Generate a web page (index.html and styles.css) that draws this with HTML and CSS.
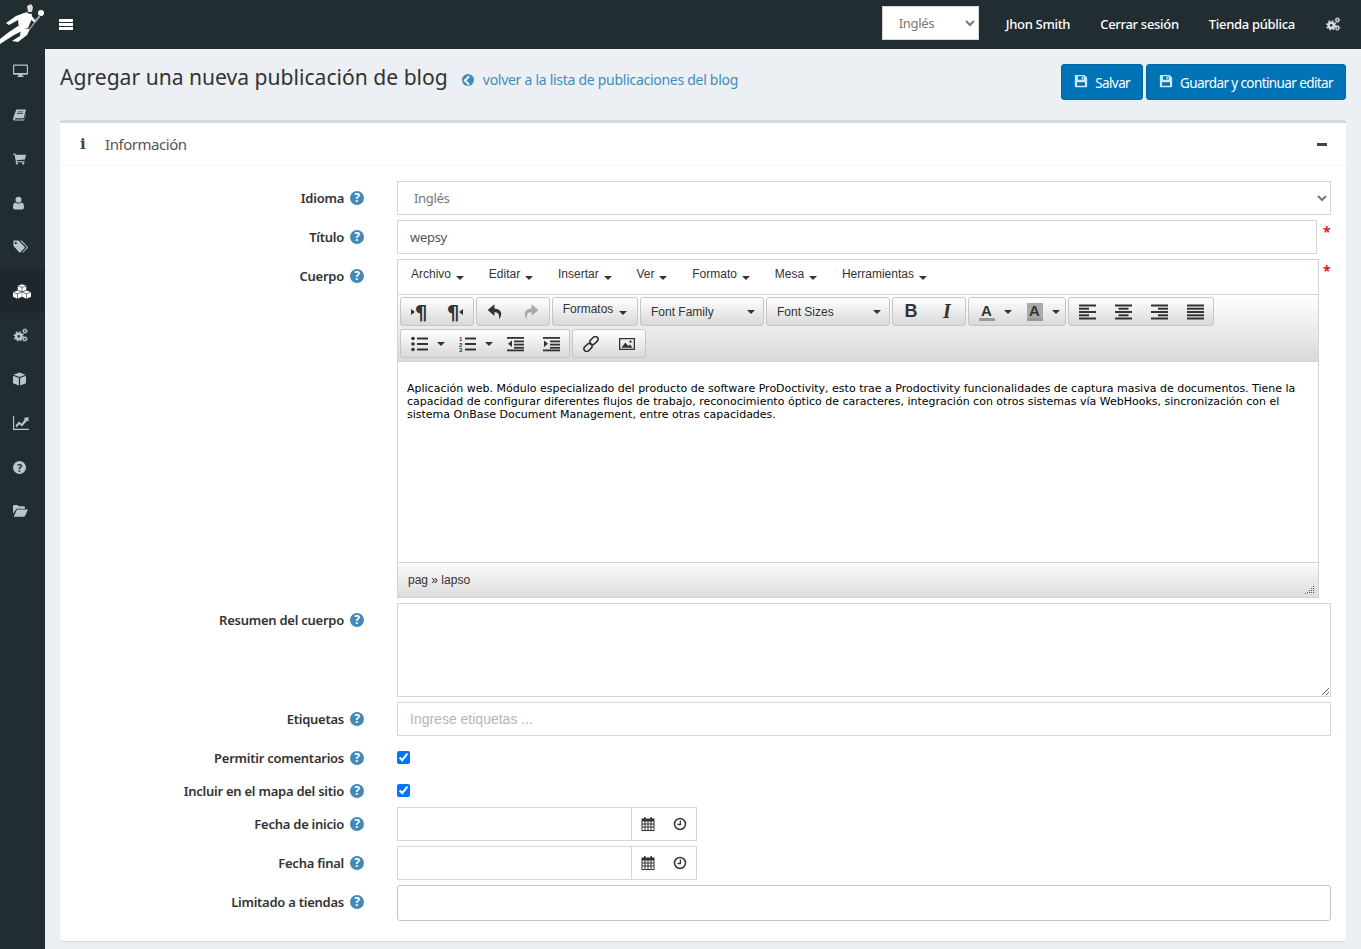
FILE: index.html
```html
<!DOCTYPE html>
<html lang="es">
<head>
    <meta charset="UTF-8">
    <meta name="viewport" content="width=device-width, initial-scale=1.0">
    <title>Agregar una nueva publicación de blog</title>
    <link rel="stylesheet" href="styles.css">
</head>
<body>
    <svg class="sprite" xmlns="http://www.w3.org/2000/svg">
        <symbol id="i-cogs" viewBox="0 0 16 16">
            <circle cx="6" cy="9.500" r="3" fill="none" stroke="currentColor" stroke-width="3"/>
            <circle cx="6" cy="9.500" r="5.100" fill="none" stroke="currentColor" stroke-width="1.700" stroke-dasharray="2 2"/>
            <circle cx="13" cy="3.500" r="1.700" fill="none" stroke="currentColor" stroke-width="1.400"/>
            <circle cx="13" cy="12.500" r="1.700" fill="none" stroke="currentColor" stroke-width="1.400"/>
            <circle cx="13" cy="3.500" r="2.800" fill="none" stroke="currentColor" stroke-width="1" stroke-dasharray="1.300 1.300"/>
            <circle cx="13" cy="12.500" r="2.800" fill="none" stroke="currentColor" stroke-width="1" stroke-dasharray="1.300 1.300"/>
        </symbol>
        <symbol id="i-save" viewBox="0 0 16 16">
            <path fill="currentColor" fill-rule="evenodd" d="M2 1h10l3 3v10a1 1 0 0 1-1 1H2a1 1 0 0 1-1-1V2a1 1 0 0 1 1-1zM4.500 2.500v4h6.500v-4zM8.600 3h1.500v3H8.600zM3.500 9.500v4h9v-4z"/>
        </symbol>
        <symbol id="i-desktop" viewBox="0 0 16 15">
            <path fill="currentColor" fill-rule="evenodd" d="M1 .5h14a1 1 0 0 1 1 1v9a1 1 0 0 1-1 1H10l.4 1.500h1.100v1h-7v-1h1.100l.4-1.500H1a1 1 0 0 1-1-1v-9a1 1 0 0 1 1-1zM1.200 1.800v7.900h13.600V1.800z"/>
        </symbol>
        <symbol id="i-book" viewBox="0 0 14 12">
            <path fill="currentColor" fill-rule="evenodd" d="M3.500 0H14l-2.500 9.500H2.800c-.9 0-1 1.300 0 1.300h9.300l1.500-6 .4.400L12 12H2.200C.4 12-.2 10.500.2 9.200zM5 2.200l-.2.800h6.300l.2-.8zM4.400 4.200l-.2.800h6.300l.2-.8z"/>
        </symbol>
        <symbol id="i-cart" viewBox="0 0 14 12">
            <path fill="currentColor" d="M0 0h2.500l.5 1.500H14l-1.200 5-8.800.9.300.9h8.200v1.100H3.200L1.600 1.100H0z"/>
            <circle cx="4.200" cy="10.800" r="1.200" fill="currentColor"/>
            <circle cx="11" cy="10.800" r="1.200" fill="currentColor"/>
        </symbol>
        <symbol id="i-user" viewBox="0 0 11 13">
            <circle cx="5.500" cy="3.300" r="3" fill="currentColor"/>
            <path fill="currentColor" d="M2.300 6c.8.700 2 1.100 3.200 1.100S7.900 6.700 8.700 6C10.300 6.400 11 8 11 10.800c0 1.300-.7 2.200-1.900 2.200H1.900C.7 13 0 12.100 0 10.800 0 8 .7 6.400 2.300 6z"/>
        </symbol>
        <symbol id="i-tags" viewBox="0 0 16 14">
            <path fill="currentColor" fill-rule="evenodd" d="M.5 0h5.300l6.600 6.600c.4.400.4 1 0 1.400l-4.400 4.500c-.4.400-1 .4-1.400 0L.5 5.800zM3 1.600a1.200 1.200 0 1 0 0 2.400 1.200 1.200 0 0 0 0-2.400z"/>
            <path fill="currentColor" d="M7.600 0h1.800l6.200 6.600c.4.400.4 1 0 1.400l-4.400 4.500c-.4.400-.9.300-1.200 0l4.200-4.400c.5-.5.500-1.100 0-1.600z"/>
        </symbol>
        <symbol id="i-cubes" viewBox="0 0 20 16">
            <g fill="currentColor">
                <path d="M10 0l4.700 1.700v4.700L10 8.100 5.300 6.400V1.700z"/>
                <path d="M5 7l4.800 1.700v5.200L5 16 0 13.900V8.700z"/>
                <path d="M15 7l5 1.700v5.200L15 16l-4.800-2.100V8.700z"/>
            </g>
            <path fill="none" stroke="#1e282c" stroke-width=".7" d="M5.600 1.900L10 3.500l4.400-1.600M.3 8.900L5 10.500l4.500-1.600M5 10.500V16M10.500 8.900l4.500 1.600 4.700-1.600M15 10.500V16M10 3.500v4.600"/>
        </symbol>
        <symbol id="i-cube" viewBox="0 0 14 14">
            <path fill="currentColor" d="M7 0l6.500 2.300L7 4.800.5 2.300zM0 3.500l6.300 2.400V14L0 11.500zM14 3.500v8L7.700 14V5.900z"/>
        </symbol>
        <symbol id="i-chart" viewBox="0 0 16 14">
            <path fill="currentColor" d="M0 0h1.100v12.800H16V14H0z"/>
            <path fill="currentColor" d="M2.500 9.500l3.600-4 2.500 2.200 3.300-4.400-1.200-1.100L15.500 1v4.800l-1.200-1.200-5.400 6-2.500-2.300-3 3.100z"/>
        </symbol>
        <symbol id="i-folder" viewBox="0 0 16 13">
            <path fill="currentColor" d="M0 1.500C0 .7.600 0 1.400 0h3.300l1.400 1.500h5.300c.7 0 1.300.6 1.300 1.300V4H3.700L0 9.500z"/>
            <path fill="currentColor" d="M4.200 5H16l-3.200 6.700c-.2.500-.6.800-1.100.8H.7z"/>
        </symbol>
        <symbol id="i-calendar" viewBox="0 0 14 14">
            <path fill="currentColor" fill-rule="evenodd" d="M3 0h1.500v1.500h5V0H11v1.500h2.500V14H.5V1.500H3zM1.500 4.500v2h2v-2zM4.500 4.500v2h2v-2zM7.500 4.500v2h2v-2zM10.500 4.500v2h2v-2zM1.500 7.500v2h2v-2zM4.500 7.500v2h2v-2zM7.500 7.500v2h2v-2zM10.500 7.500v2h2v-2zM1.500 10.500V13h2v-2.500zM4.500 10.500V13h2v-2.500zM7.500 10.500V13h2v-2.500zM10.500 10.500V13h2v-2.500z"/>
        </symbol>
        <symbol id="i-clock" viewBox="0 0 14 14">
            <circle cx="7" cy="7" r="5.500" fill="none" stroke="currentColor" stroke-width="1.500"/>
            <path fill="none" stroke="currentColor" stroke-width="1.300" d="M7.400 3.500v4H4.500"/>
        </symbol>
        <symbol id="i-undo" viewBox="0 0 16 16">
            <path fill="currentColor" d="M7.500 1L1.500 6.300l6 5.200V8.200c3 0 4.700 1.500 4 6.300 3-3.500 3.500-9.200-4-9.700z"/>
        </symbol>
        <symbol id="i-link" viewBox="0 0 16 16">
            <g fill="none" stroke="currentColor" stroke-width="1.600">
                <rect x="8.300" y="0" width="5.400" height="9" rx="2.600" transform="rotate(45 11 4.500)"/>
                <rect x="2.300" y="7" width="5.400" height="9" rx="2.600" transform="rotate(45 5 11.500)"/>
            </g>
        </symbol>
        <symbol id="i-image" viewBox="0 0 16 14">
            <path fill="currentColor" fill-rule="evenodd" d="M0 1h16v12H0zM1.300 2.300v9.400h13.400V2.300z"/>
            <path fill="currentColor" d="M2.500 10.700l3.800-5.200 3 3.400 1.700-1.400 2.500 3.200z"/>
            <circle cx="11.500" cy="4.600" r="1.200" fill="currentColor"/>
        </symbol>
        <symbol id="i-bullist" viewBox="0 0 17 16">
            <g fill="currentColor">
                <circle cx="2" cy="2.500" r="1.800"/><circle cx="2" cy="8" r="1.800"/><circle cx="2" cy="13.500" r="1.800"/>
                <rect x="6" y="1.500" width="11" height="2"/><rect x="6" y="7" width="11" height="2"/><rect x="6" y="12.500" width="11" height="2"/>
            </g>
        </symbol>
        <symbol id="i-numlist" viewBox="0 0 17 16">
            <g fill="currentColor">
                <rect x="6" y="1.500" width="11" height="2"/><rect x="6" y="7" width="11" height="2"/><rect x="6" y="12.500" width="11" height="2"/>
                <text x="0" y="5" font-family="Liberation Sans" font-size="6" font-weight="700">1</text>
                <text x="0" y="10.500" font-family="Liberation Sans" font-size="6" font-weight="700">2</text>
                <text x="0" y="16" font-family="Liberation Sans" font-size="6" font-weight="700">3</text>
            </g>
        </symbol>
        <symbol id="i-outdent" viewBox="0 0 17 16">
            <g fill="currentColor">
                <rect y="1" width="17" height="1.800"/><rect x="7" y="4.500" width="10" height="1.800"/><rect x="7" y="7.700" width="10" height="1.800"/><rect x="7" y="10.900" width="10" height="1.800"/><rect y="13.500" width="17" height="1.800"/>
                <path d="M5 4.500v6.500L1 7.800z"/>
            </g>
        </symbol>
        <symbol id="i-indent" viewBox="0 0 17 16">
            <g fill="currentColor">
                <rect y="1" width="17" height="1.800"/><rect x="7" y="4.500" width="10" height="1.800"/><rect x="7" y="7.700" width="10" height="1.800"/><rect x="7" y="10.900" width="10" height="1.800"/><rect y="13.500" width="17" height="1.800"/>
                <path d="M1 4.500v6.500l4-3.200z"/>
            </g>
        </symbol>
        <symbol id="i-al" viewBox="0 0 17 15">
            <g fill="currentColor"><rect width="17" height="2"/><rect y="3.200" width="10" height="2"/><rect y="6.500" width="17" height="2"/><rect y="9.800" width="10" height="2"/><rect y="13" width="17" height="2"/></g>
        </symbol>
        <symbol id="i-ac" viewBox="0 0 17 15">
            <g fill="currentColor"><rect width="17" height="2"/><rect x="3.500" y="3.200" width="10" height="2"/><rect y="6.500" width="17" height="2"/><rect x="3.500" y="9.800" width="10" height="2"/><rect y="13" width="17" height="2"/></g>
        </symbol>
        <symbol id="i-ar" viewBox="0 0 17 15">
            <g fill="currentColor"><rect width="17" height="2"/><rect x="7" y="3.200" width="10" height="2"/><rect y="6.500" width="17" height="2"/><rect x="7" y="9.800" width="10" height="2"/><rect y="13" width="17" height="2"/></g>
        </symbol>
        <symbol id="i-aj" viewBox="0 0 17 15">
            <g fill="currentColor"><rect width="17" height="2"/><rect y="3.200" width="17" height="2"/><rect y="6.500" width="17" height="2"/><rect y="9.800" width="17" height="2"/><rect y="13" width="17" height="2"/></g>
        </symbol>
    </svg>

    <header class="topbar">
        <a class="logo" href="#">
            <svg viewBox="0 0 46 46" width="46" height="46">
                <g fill="#fff">
                    <path d="M6 23l10-7 11-4 2 3-11 5-9 5z"/>
                    <path d="M24 13l8 1-1 7-3 7-9 1-1-9z"/>
                    <path d="M31 15l4 5 4-4 1 1-5 6-5-4z"/>
                    <path d="M18 26l8 3-12 6-14 9v-5l9-7z"/>
                    <path d="M21 28l9 1-3 6-9 7-6-1 8-5z"/>
                    <circle cx="41" cy="13" r="3"/>
                </g>
                <path d="M27 6l4-2 2 3-1 5-4 0z" fill="#ddd"/>
                <path d="M39 17L29 30" stroke="#999" stroke-width="1.300"/>
            </svg>
        </a>
        <a class="menu-toggle" href="#"><span></span><span></span><span></span></a>
        <div class="topbar-right">
            <select class="lang-select"><option>Inglés</option></select>
            <a href="#">Jhon Smith</a>
            <a href="#">Cerrar sesión</a>
            <a href="#">Tienda pública</a>
            <a class="cog" href="#"><svg class="ic"><use href="#i-cogs"/></svg></a>
        </div>
    </header>

    <div class="wrap">
        <aside class="sidebar">
            <a href="#"><svg class="ic s15"><use href="#i-desktop"/></svg></a>
            <a href="#"><svg class="ic s13"><use href="#i-book"/></svg></a>
            <a href="#"><svg class="ic s13"><use href="#i-cart"/></svg></a>
            <a href="#"><svg class="ic s11"><use href="#i-user"/></svg></a>
            <a href="#"><svg class="ic s15"><use href="#i-tags"/></svg></a>
            <a class="active" href="#"><svg class="ic ic-wide"><use href="#i-cubes"/></svg></a>
            <a href="#"><svg class="ic s15"><use href="#i-cogs"/></svg></a>
            <a href="#"><svg class="ic s13"><use href="#i-cube"/></svg></a>
            <a href="#"><svg class="ic"><use href="#i-chart"/></svg></a>
            <a href="#"><span class="side-help">?</span></a>
            <a href="#"><svg class="ic s15"><use href="#i-folder"/></svg></a>
        </aside>

        <main class="content">
            <div class="page-head">
                <h1>Agregar una nueva publicación de blog</h1>
                <a class="back" href="#"><span class="back-icon"></span>volver a la lista de publicaciones del blog</a>
                <div class="actions">
                    <button class="btn"><svg class="ic-save"><use href="#i-save"/></svg>Salvar</button>
                    <button class="btn"><svg class="ic-save"><use href="#i-save"/></svg>Guardar y continuar editar</button>
                </div>
            </div>

            <section class="card">
                <div class="card-head">
                    <span class="info-i">i</span>
                    <span class="card-title">Información</span>
                    <span class="minus"></span>
                </div>
                <div class="card-body">
                    <div class="row">
                        <label class="lbl">Idioma <span class="help">?</span></label>
                        <div class="ctrl"><select class="input sel"><option>Inglés</option></select></div>
                    </div>
                    <div class="row">
                        <label class="lbl">Título <span class="help">?</span></label>
                        <div class="ctrl"><input class="input" type="text" value="wepsy"><span class="req">*</span></div>
                    </div>
                    <div class="row">
                        <label class="lbl">Cuerpo <span class="help">?</span></label>
                        <div class="ctrl">
                            <div class="editor">
                                <div class="ed-menu">
                                    <span>Archivo<i class="caret"></i></span>
                                    <span>Editar<i class="caret"></i></span>
                                    <span>Insertar<i class="caret"></i></span>
                                    <span>Ver<i class="caret"></i></span>
                                    <span>Formato<i class="caret"></i></span>
                                    <span>Mesa<i class="caret"></i></span>
                                    <span>Herramientas<i class="caret"></i></span>
                                </div>
                                <div class="ed-toolbar">
                                    <div class="tb-row">
                                        <div class="tb-group">
                                            <span class="tb w36 pil"><i class="tri-r"></i>¶</span>
                                            <span class="tb w36 pil">¶<i class="tri-l"></i></span>
                                        </div>
                                        <div class="tb-group">
                                            <span class="tb w36"><svg class="t18"><use href="#i-undo"/></svg></span>
                                            <span class="tb w36 off"><svg class="t18 flip"><use href="#i-undo"/></svg></span>
                                        </div>
                                        <div class="tb-group">
                                            <span class="tb w84 txt-up">Formatos<i class="caret"></i></span>
                                        </div>
                                        <div class="tb-group">
                                            <span class="tb w122 listbox">Font Family<i class="caret"></i></span>
                                        </div>
                                        <div class="tb-group">
                                            <span class="tb w122 listbox">Font Sizes<i class="caret"></i></span>
                                        </div>
                                        <div class="tb-group">
                                            <span class="tb w36 fmt-b">B</span>
                                            <span class="tb w36 fmt-i">I</span>
                                        </div>
                                        <div class="tb-group">
                                            <span class="tb w48 split"><b class="color-a">A</b><i class="caret"></i></span>
                                            <span class="tb w48 split"><b class="color-a bg">A</b><i class="caret"></i></span>
                                        </div>
                                        <div class="tb-group">
                                            <span class="tb w36"><svg class="t17"><use href="#i-al"/></svg></span>
                                            <span class="tb w36"><svg class="t17"><use href="#i-ac"/></svg></span>
                                            <span class="tb w36"><svg class="t17"><use href="#i-ar"/></svg></span>
                                            <span class="tb w36"><svg class="t17"><use href="#i-aj"/></svg></span>
                                        </div>
                                    </div>
                                    <div class="tb-row">
                                        <div class="tb-group">
                                            <span class="tb w48 split"><svg class="t17"><use href="#i-bullist"/></svg><i class="caret"></i></span>
                                            <span class="tb w48 split"><svg class="t17"><use href="#i-numlist"/></svg><i class="caret"></i></span>
                                            <span class="tb w36"><svg class="t17"><use href="#i-outdent"/></svg></span>
                                            <span class="tb w36"><svg class="t17"><use href="#i-indent"/></svg></span>
                                        </div>
                                        <div class="tb-group">
                                            <span class="tb w36"><svg class="t16"><use href="#i-link"/></svg></span>
                                            <span class="tb w36"><svg class="t16"><use href="#i-image"/></svg></span>
                                        </div>
                                    </div>
                                </div>
                                <div class="ed-body">Aplicación web. Módulo especializado del producto de software ProDoctivity, esto trae a Prodoctivity funcionalidades de captura masiva de documentos. Tiene la capacidad de configurar diferentes flujos de trabajo, reconocimiento óptico de caracteres, integración con otros sistemas vía WebHooks, sincronización con el sistema OnBase Document Management, entre otras capacidades.</div>
                                <div class="ed-status">
                                    <span>pag » lapso</span>
                                    <svg class="grip" viewBox="0 0 10 8" width="10" height="8">
                                        <path d="M8 0h1v1H8zM6 2h1v1H6zM8 2h1v1H8zM4 4h1v1H4zM6 4h1v1H6zM8 4h1v1H8zM2 6h1v1H2zM0 7h1v1H0zM4 6h1v1H4zM6 6h1v1H6zM8 6h1v1H8z" fill="#555"/>
                                    </svg>
                                </div>
                            </div>
                            <span class="req req-ed">*</span>
                        </div>
                    </div>
                    <div class="row">
                        <label class="lbl">Resumen del cuerpo <span class="help">?</span></label>
                        <div class="ctrl"><textarea class="input area"></textarea></div>
                    </div>
                    <div class="row">
                        <label class="lbl">Etiquetas <span class="help">?</span></label>
                        <div class="ctrl"><input class="input tags" type="text" placeholder="Ingrese etiquetas ..."></div>
                    </div>
                    <div class="row row-check">
                        <label class="lbl">Permitir comentarios <span class="help">?</span></label>
                        <div class="ctrl"><input class="check" type="checkbox" checked></div>
                    </div>
                    <div class="row row-check">
                        <label class="lbl">Incluir en el mapa del sitio <span class="help">?</span></label>
                        <div class="ctrl"><input class="check" type="checkbox" checked></div>
                    </div>
                    <div class="row">
                        <label class="lbl">Fecha de inicio <span class="help">?</span></label>
                        <div class="ctrl">
                            <div class="datepick">
                                <input type="text">
                                <div class="date-btns"><svg class="t14"><use href="#i-calendar"/></svg><svg class="t14"><use href="#i-clock"/></svg></div>
                            </div>
                        </div>
                    </div>
                    <div class="row">
                        <label class="lbl">Fecha final <span class="help">?</span></label>
                        <div class="ctrl">
                            <div class="datepick">
                                <input type="text">
                                <div class="date-btns"><svg class="t14"><use href="#i-calendar"/></svg><svg class="t14"><use href="#i-clock"/></svg></div>
                            </div>
                        </div>
                    </div>
                    <div class="row">
                        <label class="lbl">Limitado a tiendas <span class="help">?</span></label>
                        <div class="ctrl"><div class="multi"></div></div>
                    </div>
                </div>
            </section>
        </main>
    </div>
</body>
</html>
```

FILE: styles.css
```css
* {
    box-sizing: border-box;
}

body {
    margin: 0;
    background-color: #ecf0f5;
    color: #333;
    font-family: "Noto Sans", sans-serif;
    font-size: 13px;
}

a {
    text-decoration: none;
}

.sprite {
    display: none;
}

/* barra superior */
.topbar {
    display: flex;
    align-items: center;
    height: 49px;
    background-color: #222d32;
}

.logo {
    display: block;
    width: 45px;
    height: 49px;
}

.logo svg {
    display: block;
}

.menu-toggle {
    display: flex;
    flex-direction: column;
    gap: 1px;
    width: 14px;
    margin: -1px 0 0 14px;
}

.menu-toggle span {
    height: 3px;
    background-color: #fff;
}

.topbar-right {
    display: flex;
    align-items: center;
    margin-left: auto;
    padding-right: 20px;
}

.topbar-right a {
    margin: 0 0 2px 30px;
    color: #fff;
    font-size: 13px;
    font-weight: 500;
    letter-spacing: -.3px;
}

.topbar-right a:first-of-type {
    margin-left: 27px;
}

.topbar-right .cog {
    display: flex;
    color: #d8dde0;
}

.ic {
    display: block;
    width: 16px;
    height: 14px;
}

.ic-wide {
    width: 18px;
    height: 15px;
}

.s15 { width: 15px; }
.s13 { width: 13px; }
.s11 { width: 11px; }

.lang-select {
    width: 97px;
    height: 34px;
    margin-bottom: 3px;
    padding-left: 12px;
    border: 1px solid #d2d6de;
    border-radius: 0;
    background-color: #fff;
    color: #777;
    font-family: "Noto Sans", sans-serif;
    font-size: 13px;
    letter-spacing: -.3px;
}

/* cuerpo */
.wrap {
    display: flex;
    min-height: 900px;
}

.sidebar {
    flex: 0 0 45px;
    background-color: #222d32;
}

.sidebar a {
    display: flex;
    align-items: center;
    height: 44px;
    padding-left: 13px;
    color: #b8c7ce;
}

.sidebar a.active {
    background-color: #1e282c;
    color: #fff;
}

.side-help {
    width: 13px;
    height: 13px;
    border-radius: 50%;
    background-color: #b8c7ce;
    color: #222d32;
    font-size: 11px;
    font-weight: 700;
    line-height: 13px;
    text-align: center;
}

.content {
    flex: 1;
    padding: 15px 15px 8px;
}

.page-head {
    display: flex;
    align-items: flex-start;
    margin-bottom: 20px;
}

.page-head h1 {
    margin: -1px 0 0;
    color: #333;
    font-size: 21.100px;
    font-weight: 400;
    line-height: 28px;
}

.back {
    display: flex;
    align-items: center;
    margin: 6px 0 0 14px;
    color: #3c8dbc;
    font-size: 14px;
    letter-spacing: -.28px;
}

.back-icon {
    position: relative;
    width: 12px;
    height: 12px;
    margin-right: 9px;
    border-radius: 50%;
    background-color: #3c8dbc;
}

.back-icon::before {
    content: "";
    position: absolute;
    top: 3px;
    left: 3px;
    width: 5px;
    height: 5px;
    border-left: 2px solid #ecf0f5;
    border-bottom: 2px solid #ecf0f5;
    transform: rotate(45deg);
}

.actions {
    display: flex;
    gap: 3px;
    margin-left: auto;
}

.btn {
    display: flex;
    align-items: center;
    height: 36px;
    padding: 2px 12px 0;
    border: 1px solid #0067a3;
    border-radius: 3px;
    background-color: #0073b7;
    color: #fff;
    font-family: "Noto Sans", sans-serif;
    font-size: 13.500px;
    letter-spacing: -.6px;
}

.ic-save {
    width: 14px;
    height: 14px;
    margin: -5px 7px 0 0;
    color: #d6e6f2;
}

/* tarjeta */
.card {
    border-top: 3px solid #d2d6de;
    border-radius: 3px;
    background-color: #fff;
    box-shadow: 0 1px 1px rgba(0, 0, 0, .1);
}

.card-head {
    display: flex;
    align-items: center;
    height: 43px;
    padding: 0 20px;
    border-bottom: 1px solid #f4f4f4;
}

.info-i {
    width: 25px;
    color: #444;
    font-family: "DejaVu Serif", serif;
    font-size: 15px;
    font-weight: 700;
}

.card-title {
    color: #555;
    font-size: 15px;
    letter-spacing: -.45px;
}

.minus {
    width: 10px;
    height: 3px;
    margin-left: auto;
    margin-right: -1px;
    background-color: #444;
}

.card-body {
    display: flex;
    flex-direction: column;
    gap: 5px;
    padding: 15px 15px 20px 0;
}

.row {
    display: flex;
    align-items: flex-start;
}

.row-check {
    height: 28px;
}

.lbl {
    flex: 0 0 337px;
    display: flex;
    justify-content: flex-end;
    align-items: center;
    gap: 6px;
    height: 34px;
    padding-right: 33px;
    color: #333;
    font-size: 13px;
    font-weight: 600;
    letter-spacing: -.25px;
}

.help {
    flex: 0 0 14px;
    width: 14px;
    height: 14px;
    border-radius: 50%;
    background-color: #4289b8;
    color: #fff;
    font-size: 12px;
    font-weight: 700;
    letter-spacing: 0;
    line-height: 14px;
    text-align: center;
}

.ctrl {
    flex: 1;
    display: flex;
    align-items: flex-start;
    min-width: 0;
}

.input {
    width: 100%;
    height: 34px;
    padding: 0 12px;
    border: 1px solid #d2d6de;
    border-radius: 0;
    background-color: #fff;
    color: #555;
    font-family: "Noto Sans", sans-serif;
    font-size: 13px;
    letter-spacing: -.3px;
    outline: none;
}

.sel {
    padding-left: 12px;
    color: #777;
}

.area {
    display: block;
    height: 94px;
    padding: 6px 12px;
}

.tags {
    font-family: "Liberation Sans", sans-serif;
    font-size: 14px;
    letter-spacing: 0;
}

.tags::placeholder {
    color: #b5b5b5;
}

.req {
    flex: 0 0 14px;
    padding: 2px 0 0 6px;
    color: #e02020;
    font-size: 14px;
    font-weight: 700;
    line-height: 20px;
}

.req-ed {
    flex: 0 0 12px;
    padding-left: 4px;
}

.check {
    width: 13px;
    height: 13px;
    margin: 10px 0 0;
}

.datepick {
    display: flex;
    width: 300px;
    height: 34px;
    border: 1px solid #d2d6de;
    background-color: #fff;
}

.datepick input {
    flex: 1;
    min-width: 0;
    border: 0;
    border-right: 1px solid #d2d6de;
    outline: none;
}

.date-btns {
    flex: 0 0 64px;
    display: flex;
    align-items: center;
    justify-content: space-between;
    padding: 0 9px;
    color: #333;
}

.t14 {
    width: 14px;
    height: 14px;
}

.multi {
    width: 100%;
    height: 36px;
    border: 1px solid #c4c4c4;
    border-radius: 3px;
    background-color: #fff;
}

/* editor */
.editor {
    flex: 1;
    min-width: 0;
    border: 1px solid #d4d4d4;
    font-family: "Liberation Sans", sans-serif;
    font-size: 12px;
    color: #333;
}

.ed-menu {
    display: flex;
    height: 35px;
    padding: 7px 0 0 13px;
    border-bottom: 1px solid #d4d4d4;
    background-color: #fff;
}

.ed-menu span {
    margin-right: 24.800px;
    line-height: 14px;
}

.caret {
    display: inline-block;
    width: 0;
    height: 0;
    margin-left: 5px;
    border-top: 4px solid #333;
    border-left: 4px solid transparent;
    border-right: 4px solid transparent;
    vertical-align: -2px;
}

.ed-toolbar {
    display: flex;
    flex-direction: column;
    gap: 3px;
    height: 67px;
    padding: 2px 0 0 2px;
    border-bottom: 1px solid #d4d4d4;
    background: linear-gradient(#fff, #d9d9d9);
}

.tb-row {
    display: flex;
    gap: 2px;
}

.tb-group {
    display: flex;
    height: 29px;
    border: 1px solid #c5c5c5;
    border-radius: 3px;
    background: linear-gradient(#fff, #d9d9d9);
}

.tb {
    display: flex;
    align-items: center;
    justify-content: center;
    color: #333;
}

.w36 { width: 36px; }
.w48 { width: 48px; }
.w84 { width: 84px; }
.w122 { width: 122px; }

.split {
    justify-content: flex-start;
    padding-left: 9.500px;
}

.split .caret {
    margin-left: 9px;
}

.t16 {
    width: 16px;
    height: 16px;
}

.t17 {
    width: 17px;
    height: 16px;
}

.t18 {
    width: 18px;
    height: 18px;
}

.flip {
    transform: scaleX(-1);
}

.off {
    color: #aaa;
}

.pil {
    font-family: "DejaVu Sans", sans-serif;
    font-size: 20px;
    font-weight: 700;
}

.tri-r,
.tri-l {
    width: 0;
    height: 0;
    border-top: 3px solid transparent;
    border-bottom: 3px solid transparent;
}

.tri-r {
    border-left: 4px solid #333;
}

.tri-l {
    border-right: 4px solid #333;
}

.txt-up {
    padding-bottom: 5px;
}

.txt-up .caret {
    transform: translateY(4px);
    margin-left: 6px;
}

.listbox {
    justify-content: space-between;
    padding: 0 8px 0 10px;
}

.fmt-b {
    font-size: 18px;
    font-weight: 700;
}

.fmt-i {
    font-family: "Liberation Serif", serif;
    font-size: 20px;
    font-style: italic;
    font-weight: 700;
}

.color-a {
    display: block;
    width: 16px;
    border-bottom: 3px solid #999;
    font-size: 15px;
    line-height: 15px;
    text-align: center;
}

.color-a.bg {
    background-color: #aaa;
}

.ed-body {
    height: 200px;
    padding: 20px 10px 0 9px;
    background-color: #fff;
    color: #000;
    font-family: "DejaVu Sans", sans-serif;
    font-size: 11px;
    line-height: 13px;
}

.ed-status {
    position: relative;
    height: 35px;
    padding: 10px 0 0 10px;
    border-top: 1px solid #d4d4d4;
    background: linear-gradient(#fbfbfb, #dcdcdc);
    color: #333;
    line-height: 14px;
}

.grip {
    position: absolute;
    right: 3px;
    bottom: 3px;
}
```
